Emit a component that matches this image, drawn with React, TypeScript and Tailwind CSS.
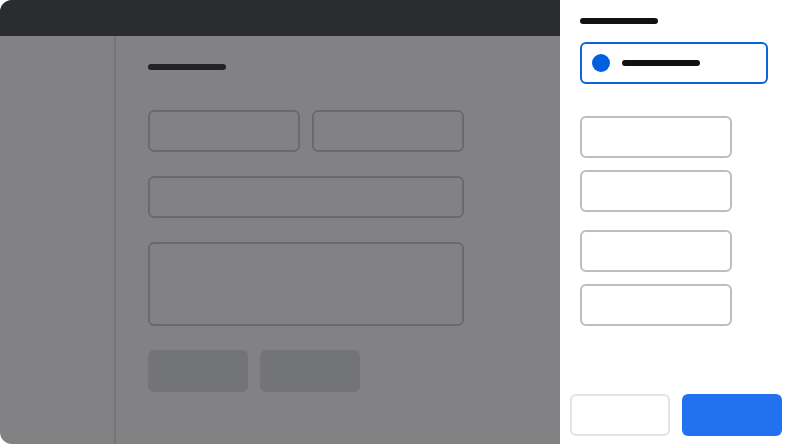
export default function App() {
  return (
    <div className="flex w-[790px] h-[446px] bg-white overflow-hidden font-['Inter',sans-serif]">
      {/* app window behind the overlay */}
      <div className="flex flex-col shrink-0 w-[560px] h-[444px] rounded-l-xl overflow-hidden bg-[#828284]">
        <div className="h-[36px] shrink-0 bg-[#2b2c30]" />
        <div className="flex flex-1">
          <div className="shrink-0 w-[116px] border-r-2 border-[#767678]" />
          <div className="flex flex-col shrink-0 pl-[32px] pt-[28px]">
            <div className="w-[78px] h-[6px] rounded-full bg-[#232325]" />
            <div className="flex gap-[12px] mt-[40px]">
              <div className="shrink-0 w-[152px] h-[42px] rounded-md border-2 border-[#6a6a6c]" />
              <div className="shrink-0 w-[152px] h-[42px] rounded-md border-2 border-[#6a6a6c]" />
            </div>
            <div className="w-[316px] h-[42px] mt-[24px] rounded-md border-2 border-[#6a6a6c]" />
            <div className="w-[316px] h-[84px] mt-[24px] rounded-md border-2 border-[#6a6a6c]" />
            <div className="flex gap-[12px] mt-[24px]">
              <div className="shrink-0 w-[100px] h-[42px] rounded-md bg-[#737476]" />
              <div className="shrink-0 w-[100px] h-[42px] rounded-md bg-[#737476]" />
            </div>
          </div>
        </div>
      </div>

      {/* drawer */}
      <div className="flex flex-col shrink-0 w-[230px] h-[446px] bg-white">
        <div className="flex flex-col px-[20px] pt-[18px]">
          <div className="w-[78px] h-[6px] rounded-full bg-[#111111]" />
          <div className="flex items-center gap-[12px] w-[188px] h-[42px] mt-[18px] pl-[10px] rounded-md border-2 border-[#0a66d8]">
            <div className="shrink-0 size-[18px] rounded-full bg-[#0060df]" />
            <div className="w-[78px] h-[6px] rounded-full bg-[#111111]" />
          </div>
          <div className="w-[152px] h-[42px] mt-[32px] rounded-md border-2 border-[#bdbdbd]" />
          <div className="w-[152px] h-[42px] mt-[12px] rounded-md border-2 border-[#bdbdbd]" />
          <div className="w-[152px] h-[42px] mt-[18px] rounded-md border-2 border-[#bdbdbd]" />
          <div className="w-[152px] h-[42px] mt-[12px] rounded-md border-2 border-[#bdbdbd]" />
        </div>
        <div className="flex gap-[12px] mt-auto pl-[10px] pr-[8px] pb-[10px]">
          <button className="shrink-0 w-[100px] h-[42px] rounded-md border-2 border-[#e3e3e3] bg-white" />
          <button className="shrink-0 w-[100px] h-[42px] rounded-md bg-[#2272ef]" />
        </div>
      </div>
    </div>
  )
}
